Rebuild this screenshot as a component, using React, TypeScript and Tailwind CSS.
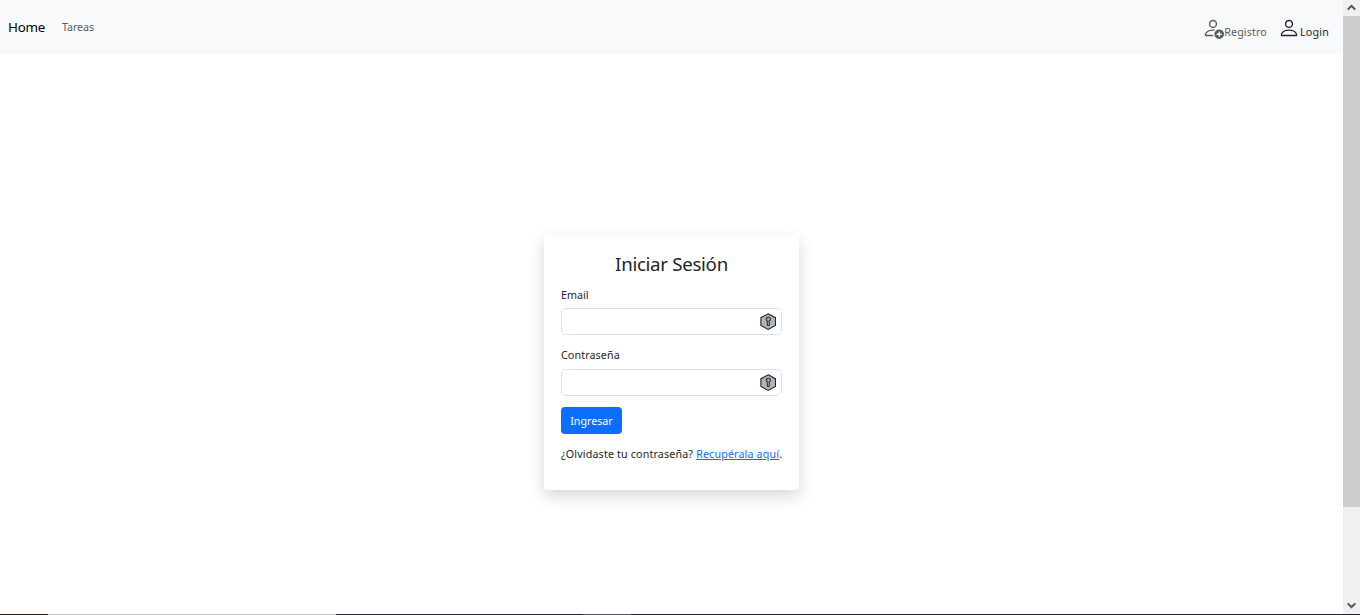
import { useState } from 'react';
import { BsPerson, BsPersonAdd } from 'react-icons/bs';

function KeyBadge() {
  return (
    <svg className="h-[18px] w-[18px]" viewBox="0 0 18 18" fill="none">
      <path d="M9.2 .8 16.5 4.7v7.8L9.2 16.4 1.9 12.5V4.7Z" fill="#adb5bd" stroke="#22262a" strokeWidth="1.1" />
      <circle cx="9.3" cy="6.3" r="2.2" fill="#8c9399" stroke="#22262a" strokeWidth="1" />
      <path d="M8.3 8.5v4h2v-4" fill="#adb5bd" stroke="#22262a" strokeWidth="1" />
      <path d="M9.3 5.5h.9v1h-.9z" fill="#e8ebee" />
    </svg>
  );
}

function Field({ label, type }: { label: string; type: string }) {
  const [value, setValue] = useState('');
  return (
    <label className="block">
      <span className="block h-[17px] whitespace-nowrap leading-[17px]">{label}</span>
      <span className="mt-[5px] flex h-[27px] items-center rounded-[5px] border border-[#dee2e6] bg-white pr-[4px]">
        <input
          className="h-full min-w-0 flex-1 bg-transparent px-2 outline-none"
          type={type}
          value={value}
          onChange={(e) => setValue(e.target.value)}
        />
        <KeyBadge />
      </span>
    </label>
  );
}

function Scrollbar() {
  return (
    <div className="flex w-[17px] shrink-0 flex-col bg-[#f0f0f0]">
      <div className="flex h-4 items-center justify-center">
        <svg className="mb-[2px] h-[7px] w-[9px]" viewBox="0 0 9 7" fill="none" stroke="#505050" strokeWidth="2">
          <path d="M.7 5.6 4.5 1.8 8.3 5.6" />
        </svg>
      </div>
      <div className="h-[491px] bg-[#cdcdcd]" />
      <div className="mt-auto flex h-[17px] items-center justify-center">
        <svg className="h-[7px] w-[9px]" viewBox="0 0 9 7" fill="none" stroke="#505050" strokeWidth="2">
          <path d="M.7 1.4 4.5 5.2 8.3 1.4" />
        </svg>
      </div>
    </div>
  );
}

export default function App() {
  return (
    <div className="flex h-[615px] w-[1360px] flex-col overflow-hidden bg-white font-['Noto_Sans','Open_Sans',sans-serif] text-[10.7px] text-[#212529]">
      <div className="flex min-h-0 flex-1">
        <div className="flex min-w-0 flex-1 flex-col">
          <nav className="flex h-[55px] shrink-0 items-center bg-[#f8f9fa] pl-2 pr-[14px]">
            <a href="#" className="mb-[2px] text-[13.4px] leading-5 tracking-[-0.25px] text-black">Home</a>
            <a href="#" className="mb-[2px] ml-[17px] leading-4 tracking-[-0.1px] text-[#595a5b]">Tareas</a>
            <div className="ml-auto flex items-start pt-[2px]">
              <a href="#" className="flex items-start text-[#595a5b]">
                <BsPersonAdd className="mr-[0.5px] h-[22px] w-[22px]" />
                <span className="mt-[7px] leading-4 tracking-[0.14px]">Registro</span>
              </a>
              <a href="#" className="ml-[11px] flex items-start text-[#212529]">
                <BsPerson className="h-[22px] w-[22px]" />
                <span className="mt-[7px] leading-4 tracking-[0.2px]">Login</span>
              </a>
            </div>
          </nav>
          <main className="flex flex-1 justify-center pt-[180px]">
            <form
              className="h-[255px] w-[255px] rounded-[4px] bg-white px-[17px] pt-[17px] shadow-[0_6px_16px_rgba(0,0,0,0.16)]"
              onSubmit={(e) => e.preventDefault()}
            >
              <h1 className="mb-[11px] text-center text-[18.7px] font-normal leading-6 tracking-[-0.3px]">Iniciar Sesión</h1>
              <div className="-mb-px [&_span+span]:mt-[4px]">
                <Field label="Email" type="email" />
              </div>
              <div className="mt-[13px] tracking-[0.12px]">
                <Field label="Contraseña" type="password" />
              </div>
              <button className="mt-[11px] flex h-[27px] w-[61px] items-center justify-center rounded-[4px] bg-[#0d6efd] pt-[2px] text-white">
                Ingresar
              </button>
              <p className="mt-[12px] whitespace-nowrap leading-4 tracking-[0.16px]">
                ¿Olvidaste tu contraseña?{' '}
                <a href="#" className="text-[#0d6efd] underline">Recupérala aquí</a>.
              </p>
            </form>
          </main>
        </div>
        <Scrollbar />
      </div>
      <div className="flex h-px shrink-0 bg-[#26242a]">
        <div className="w-12 bg-[#241c18]" />
        <div className="w-[288px] bg-[#c2c2c2]" />
        <div className="w-[247px] bg-[#2b2830]" />
        <div className="w-12 bg-[#55555a]" />
      </div>
    </div>
  );
}
